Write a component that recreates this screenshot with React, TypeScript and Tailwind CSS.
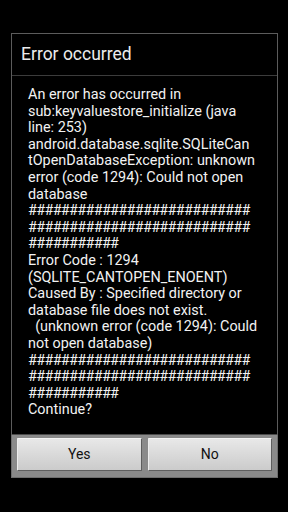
const lines = [
  'An error has occurred in',
  'sub:keyvaluestore_initialize (java',
  'line: 253)',
  'android.database.sqlite.SQLiteCan',
  'tOpenDatabaseException: unknown',
  'error (code 1294): Could not open',
  'database',
  '###########################',
  '###########################',
  '###########',
  'Error Code : 1294',
  '(SQLITE_CANTOPEN_ENOENT)',
  'Caused By : Specified directory or',
  'database file does not exist.',
  '  (unknown error (code 1294): Could',
  'not open database)',
  '###########################',
  '###########################',
  '###########',
  'Continue?',
]

export default function App() {
  return (
    <div className="w-[288px] h-[512px] bg-black pt-[33px] font-['Roboto',sans-serif]">
      <div className="ml-[11px] w-[267px] border border-[#5c5c5c] border-b-0 bg-black">
        {/* title */}
        <div className="h-[42px] flex items-center pl-[9px] border-b border-[#3c3c3c]">
          <span className="text-[17.5px] text-[#ececec] leading-none">Error occurred</span>
        </div>

        {/* message */}
        <div className="pl-[16px] pr-2 pt-[11px] pb-[15px] text-[14.4px] leading-[16.6px] text-[#f2f2f2]">
          {lines.map((line, i) => (
            <div key={i} className={line.startsWith('#') ? 'whitespace-pre tracking-[-0.65px]' : 'whitespace-pre'}>
              {line}
            </div>
          ))}
        </div>
      </div>

      {/* buttons */}
      <div className="ml-[11px] w-[267px] h-[44px] bg-[#8a8a8a] border border-[#6e6e6e] border-t-[#4a4a4a] flex gap-[6px] pl-[5px] pr-[5px] pt-[3px]">
        <button className="w-[125px] h-[33px] bg-gradient-to-b from-[#e8e8e8] to-[#cbcbcb] border border-[#5e5e5e] border-t-[#f4f4f4] border-l-[#ededed] rounded-[1px] text-[14px] text-[#111] font-['Roboto',sans-serif]">
          Yes
        </button>
        <button className="w-[125px] h-[33px] bg-gradient-to-b from-[#e8e8e8] to-[#cbcbcb] border border-[#5e5e5e] border-t-[#f4f4f4] border-l-[#ededed] rounded-[1px] text-[14px] text-[#111] font-['Roboto',sans-serif]">
          No
        </button>
      </div>
    </div>
  )
}
